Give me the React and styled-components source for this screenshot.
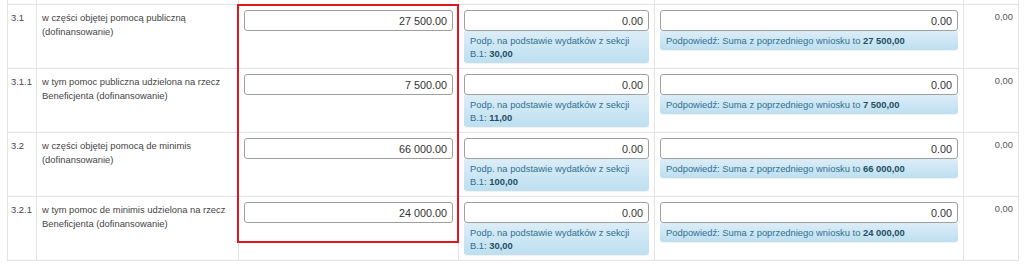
import styled, { createGlobalStyle } from "styled-components";

const GlobalStyle = createGlobalStyle`
  html, body {
    margin: 0;
    padding: 0;
    background: #fff;
  }
  body {
    font-family: "Liberation Sans", Arial, sans-serif;
    color: #333;
  }
`

const Wrapper = styled.div`
  position: relative;
  padding: 0 6px 0 7px;
`

const Table = styled.table`
  border-collapse: collapse;
  table-layout: fixed;
  width: 1011px;
  font-size: 9.4px;
  line-height: 14px;
`

const Col = styled.col`
  width: ${(p) => p.$w}px;
`

const Cell = styled.td`
  box-sizing: border-box;
  border: 1px solid #e3e3e3;
  padding: 5px;
  vertical-align: top;
  height: 64px;
`

const StripCell = styled.td`
  border: 1px solid #e3e3e3;
  border-top: none;
  padding: 0;
  height: 4px;
`

const Lp = styled(Cell)`
  padding: 6px 3px 5px 3px;
  color: #444;
`

const Label = styled(Cell)`
  padding: 6px 5px 5px 5px;
  color: #444;
`

const Amount = styled(Cell)`
  text-align: right;
  color: #555;
  padding: 5px 5px 5px 5px;
`

const Input = styled.input`
  display: block;
  box-sizing: border-box;
  width: 100%;
  height: 21px;
  margin: 0;
  padding: 0 5px;
  border: 1px solid #9f9f9f;
  border-radius: 3px;
  text-align: right;
  font-family: "Liberation Sans", Arial, sans-serif;
  font-size: 10.8px;
  color: #333;
  background: #fff;
  outline: none;
`

const Hint = styled.div`
  box-sizing: border-box;
  padding: 3px 6px 3px 6px;
  font-size: 9.4px;
  line-height: 13px;
  color: #31708f;
  background-image: linear-gradient(to bottom, #dcedf7 0, #bddff0 100%);
  border-radius: 0 0 3px 3px;
  box-shadow: 0 1px 1px rgba(0, 0, 0, 0.06);

  b {
    color: #1f4d62;
  }
`

const Highlight = styled.div`
  position: absolute;
  left: 237px;
  top: 4px;
  width: 218px;
  height: 235px;
  border: 2px solid #e1161f;
  pointer-events: none;
`

const rows = [
  {
    lp: "3.1",
    label: "w części objętej pomocą publiczną (dofinansowanie)",
    value: "27 500.00",
    b1: "30,00",
    prev: "27 500,00",
  },
  {
    lp: "3.1.1",
    label: "w tym pomoc publiczna udzielona na rzecz Beneficjenta (dofinansowanie)",
    value: "7 500.00",
    b1: "11,00",
    prev: "7 500,00",
  },
  {
    lp: "3.2",
    label: "w części objętej pomocą de minimis (dofinansowanie)",
    value: "66 000.00",
    b1: "100,00",
    prev: "66 000,00",
  },
  {
    lp: "3.2.1",
    label: "w tym pomoc de minimis udzielona na rzecz Beneficjenta (dofinansowanie)",
    value: "24 000.00",
    b1: "30,00",
    prev: "24 000,00",
  },
]

const widths = [29, 202, 220, 196, 309, 55]

const App = () => {
  return (
    <Wrapper>
      <GlobalStyle />
      <Table>
        <colgroup>
          {widths.map((w, i) => (
            <Col key={i} $w={w} />
          ))}
        </colgroup>
        <tbody>
          <tr>
            {widths.map((w, i) => (
              <StripCell key={i} />
            ))}
          </tr>
          {rows.map((r) => (
            <tr key={r.lp}>
              <Lp>{r.lp}</Lp>
              <Label>{r.label}</Label>
              <Cell>
                <Input defaultValue={r.value} />
              </Cell>
              <Cell>
                <Input defaultValue="0.00" />
                <Hint>
                  Podp. na podstawie wydatków z sekcji
                  <br />
                  B.1: <b>{r.b1}</b>
                </Hint>
              </Cell>
              <Cell>
                <Input defaultValue="0.00" />
                <Hint>
                  Podpowiedź: Suma z poprzedniego wniosku to <b>{r.prev}</b>
                </Hint>
              </Cell>
              <Amount>0,00</Amount>
            </tr>
          ))}
        </tbody>
      </Table>
      <Highlight />
    </Wrapper>
  )
}

export default App
